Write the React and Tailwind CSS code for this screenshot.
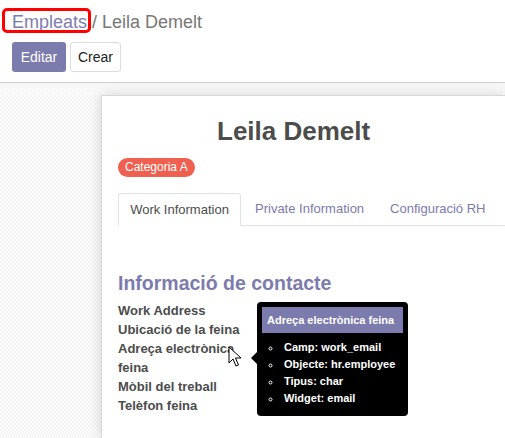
import React from 'react';

const fields = [
  'Work Address',
  'Ubicació de la feina',
  'Adreça electrònica',
  'feina',
  'Mòbil del treball',
  'Telèfon feina',
];

const tipItems = [
  ['Camp:', 'work_email'],
  ['Objecte:', 'hr.employee'],
  ['Tipus:', 'char'],
  ['Widget:', 'email'],
];

function Cursor() {
  return (
    <svg width="14" height="22" viewBox="0 0 14 22" className="absolute left-[228px] top-[346px]">
      <path d="M1 1 L1 17 L5 13 L8 20 L10.5 19 L7.5 12 L13 12 Z" fill="#fff" stroke="#000" strokeWidth="1" strokeLinejoin="round" />
    </svg>
  );
}

function Tooltip() {
  return (
    <div className="absolute left-[257px] top-[302px] w-[151px] rounded bg-black p-[5px] pb-[9px]">
      <div className="absolute -left-[6px] top-[50px] h-0 w-0 border-y-[6px] border-r-[6px] border-y-transparent border-r-black" />
      <div className="bg-[#7c7bad] px-[5px] py-[6px] text-[11px] font-bold leading-[14px] text-white">
        Adreça electrònica feina
      </div>
      <ul className="mt-[6px] list-[circle] pl-[20px] text-[11px] font-bold leading-[17px] text-white">
        {tipItems.map(([k, v]) => (
          <li key={k} className="pl-[2px]">
            {k} {v}
          </li>
        ))}
      </ul>
    </div>
  );
}

export default function App() {
  return (
    <div className="relative h-[438px] w-[505px] overflow-hidden bg-white font-['Liberation_Sans',Arial,sans-serif]">
      <div className="px-[12px] pt-[10px]">
        <div className="relative text-[18px] leading-[24px]">
          <span className="text-[#7c7bad]">Empleats</span>
          <span className="text-[#777]"> / Leila Demelt</span>
          <div className="absolute -left-[10px] -top-[2px] h-[25px] w-[89px] rounded-[5px] border-[3px] border-[#ff0000]" />
        </div>
        <div className="mt-[8px] flex gap-[4px] pb-[10px]">
          <button className="h-[30px] w-[54px] rounded-[3px] bg-[#7c7bad] text-[14px] text-white">Editar</button>
          <button className="h-[30px] w-[51px] rounded-[3px] border border-[#ddd] bg-white text-[14px] text-[#222]">Crear</button>
        </div>
      </div>
      <div className="h-[356px] border-t border-[#ccc] bg-[linear-gradient(#f6f6f6,#fafafa_12px,transparent_12px),repeating-conic-gradient(#f3f3f3_0%_25%,#fcfcfc_0%_50%)] bg-[length:100%_100%,4px_4px] pl-[101px] pt-[12px]">
        <div className="h-full border-l border-t border-[#d8d8d8] bg-white pl-[16px] shadow-[0_0_12px_rgba(0,0,0,0.15)]">
          <h1 className="pl-[99px] pt-[20px] text-[26px] font-bold leading-[30px] text-[#4c4c4c]">Leila Demelt</h1>
          <div className="mt-[12px] flex">
            <span className="rounded-full bg-[#f06050] px-[7px] text-[12px] leading-[19px] text-white">Categoria A</span>
          </div>
          <div className="mt-[16px] flex h-[33px] border-b border-[#dee2e6] text-[13px]">
            <div className="-mb-px flex h-[33px] w-[123px] items-center justify-center rounded-t-[3px] border border-b-white border-[#dee2e6] bg-white text-[#4c4c4c]">
              Work Information
            </div>
            <div className="flex items-center pl-[14px] text-[#7c7bad]">Private Information</div>
            <div className="flex items-center pl-[26px] text-[#7c7bad]">Configuració RH</div>
          </div>
          <h2 className="mt-[45px] text-[19.5px] font-bold leading-[24px] text-[#7c7bad]">Informació de contacte</h2>
          <div className="mt-[6px] text-[13px] font-bold leading-[19px] text-[#4c4c4c]">
            {fields.map((f) => (
              <div key={f}>{f}</div>
            ))}
          </div>
        </div>
      </div>
      <Tooltip />
      <Cursor />
    </div>
  );
}
